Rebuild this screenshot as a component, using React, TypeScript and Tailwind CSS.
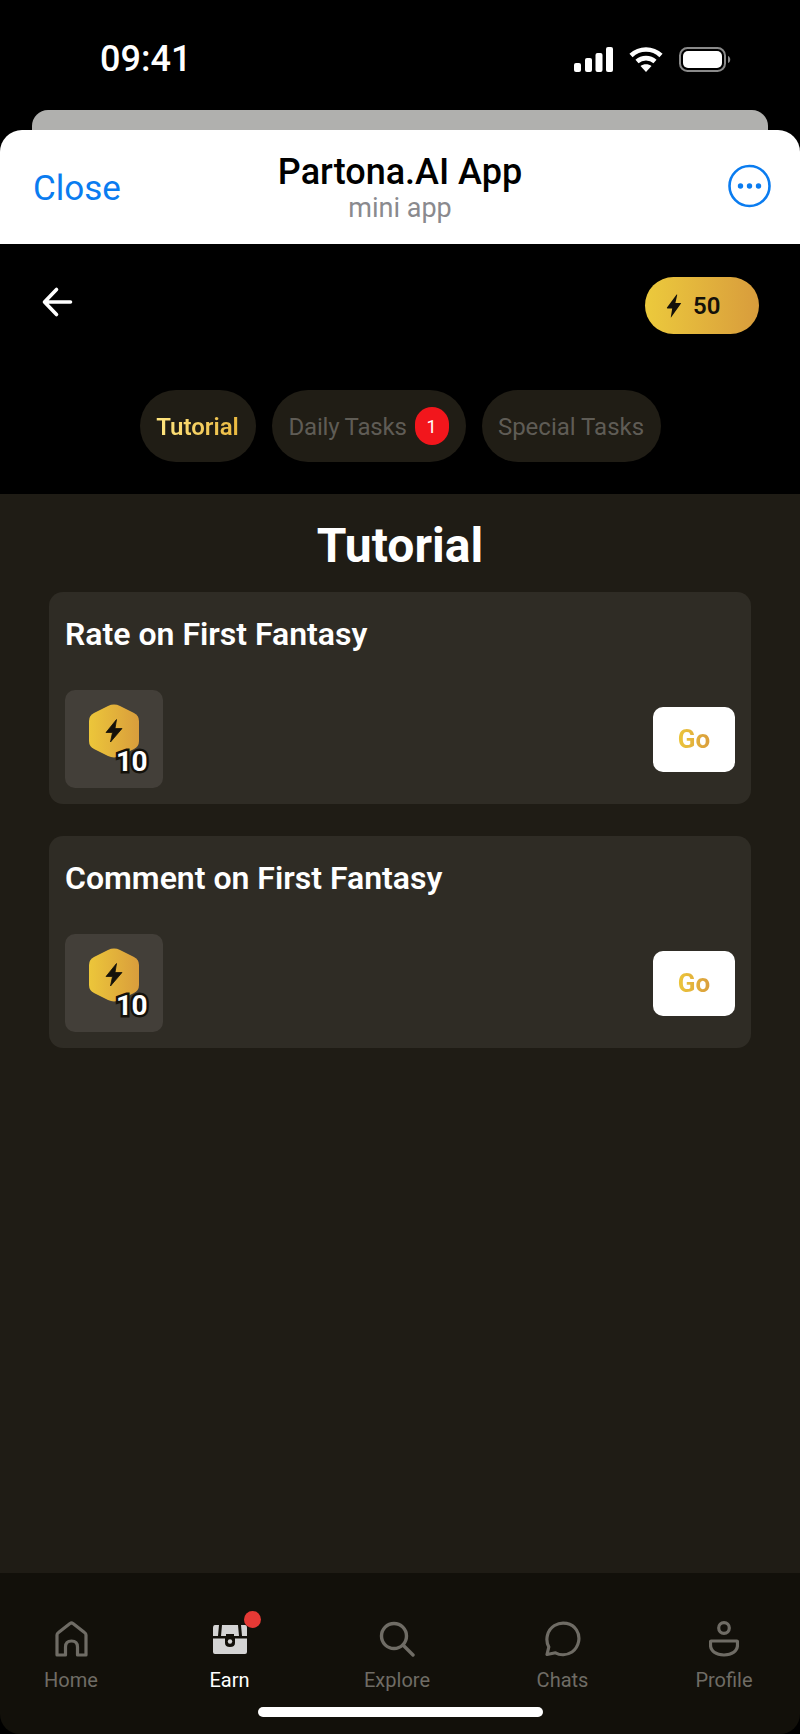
import React from "react";

const UI = "font-['Roboto',sans-serif]";

function Bolt({ className }: { className?: string }) {
  return (
    <svg className={className} viewBox="0 0 16 24" fill="#14110a">
      <path d="M10.6 0.6 L1 13.6 Q0.5 14.4 1.4 14.4 L6.2 14.4 L4.8 23.2 Q4.7 23.9 5.2 23.3 L15 9.6 Q15.5 8.9 14.6 8.9 L9.4 8.9 L11.2 1 Q11.3 0 10.6 0.6 Z" />
    </svg>
  );
}

function StatusBar() {
  return (
    <div className={`h-[110px] flex items-start justify-between pt-[42px] pl-[100px] pr-[67px] ${UI}`}>
      <span className="text-[36px] leading-[34px] font-medium text-white">09:41</span>
      <div className="flex items-start gap-[16px] pt-[5px]">
        <svg width="39" height="25" viewBox="0 0 39 25" fill="#fff">
          <rect x="0" y="16" width="7" height="9" rx="2" />
          <rect x="11" y="11" width="7" height="14" rx="2" />
          <rect x="21.5" y="6" width="7" height="19" rx="2" />
          <rect x="32" y="0" width="7" height="25" rx="2" />
        </svg>
        <svg width="34" height="25" viewBox="0 0 34 25" fill="none" stroke="#fff" strokeWidth="4.6">
          <path d="M2 8.5 C10.5 0.5 23.5 0.5 32 8.5" />
          <path d="M8 14.5 C13 10 21 10 26 14.5" />
          <path d="M17 25 L11.5 19 C14.5 16.5 19.5 16.5 22.5 19 Z" fill="#fff" stroke="none" />
        </svg>
        <svg width="54" height="25" viewBox="0 0 54 25" fill="none">
          <rect x="1" y="1" width="45" height="23" rx="7.5" stroke="#8a8a8a" strokeWidth="2" />
          <rect x="4" y="4" width="39" height="17" rx="5" fill="#fff" />
          <path d="M49 9 C52 10 52 15 49 16 Z" fill="#8a8a8a" />
        </svg>
      </div>
    </div>
  );
}

function SheetBar() {
  return (
    <div className={`h-[114px] bg-white rounded-t-[22px] grid grid-cols-[1fr_auto_1fr] items-center px-[33px] ${UI}`}>
      <span className="text-[#0a7cf0] text-[35px] leading-none pt-[2px]">Close</span>
      <div className="flex flex-col items-center">
        <span className="text-black text-[36px] leading-[41px] font-medium">Partona.AI App</span>
        <span className="text-[#8a8a8e] text-[27px] leading-[30px]">mini app</span>
      </div>
      <svg width="43" height="44" viewBox="0 0 43 44" fill="none" className="justify-self-end -mr-[4px] mt-[-2px]">
        <circle cx="21.5" cy="22" r="20" stroke="#0a7cf0" strokeWidth="2.6" />
        <circle cx="12.5" cy="22" r="2.7" fill="#0a7cf0" />
        <circle cx="21.5" cy="22" r="2.7" fill="#0a7cf0" />
        <circle cx="30.5" cy="22" r="2.7" fill="#0a7cf0" />
      </svg>
    </div>
  );
}

function TopRow() {
  return (
    <div className="flex items-start justify-between pl-[41px] pr-[41px] pt-[33px]">
      <svg width="32" height="32" viewBox="0 0 32 32" fill="none" stroke="#fff" strokeWidth="3.6" className="mt-[9px]" strokeLinecap="round" strokeLinejoin="round">
        <path d="M29.5 16 L4 16 M15.5 3.500 L3.500 16 L15.5 28.500" />
      </svg>
      <div className={`w-[114px] h-[57px] rounded-full bg-gradient-to-r from-[#ecca3c] to-[#d89c3c] flex items-center pl-[21px] gap-[11px] ${UI}`}>
        <Bolt className="w-[16px] h-[24px]" />
        <span className="text-[#14110a] text-[24px] font-semibold leading-none">50</span>
      </div>
    </div>
  );
}

function Tabs() {
  return (
    <div className={`flex justify-center gap-[16px] mt-[56px] ${UI}`}>
      <div className="h-[72px] w-[116px] rounded-[36px] bg-[#201d15] flex items-center justify-center pt-[2px]">
        <span className="bg-gradient-to-r from-[#ffe680] to-[#eab93f] bg-clip-text text-transparent text-[24px] font-semibold">Tutorial</span>
      </div>
      <div className="h-[72px] w-[194px] rounded-[36px] bg-[#201d15] flex items-center justify-between pl-[17px] pr-[17px]">
        <span className="text-[#5f5c55] text-[24px] tracking-[-0.2px] pt-[2px]">Daily Tasks</span>
        <span className="w-[34px] h-[38px] rounded-full bg-[#f2161c] text-white text-[18px] flex items-center justify-center">1</span>
      </div>
      <div className="h-[72px] w-[179px] rounded-[36px] bg-[#201d15] flex items-center justify-center pt-[2px]">
        <span className="text-[#5f5c55] text-[24px]">Special Tasks</span>
      </div>
    </div>
  );
}

function TaskCard({ title }: { title: string }) {
  return (
    <div className="h-[212px] rounded-[14px] bg-[#2f2c25] pt-[23px] px-[16px] flex flex-col justify-between pb-[16px]">
      <h3 className="text-white text-[32px] leading-[38px] font-semibold">{title}</h3>
      <div className="flex items-center justify-between">
        <div className="relative w-[98px] h-[98px] rounded-[10px] bg-[#433f39]">
          <svg className="absolute left-[24px] top-[14px]" width="50" height="54" viewBox="0 0 50 54">
            <defs>
              <linearGradient id="hexGold" x1="0" x2="1" y1="0" y2="0">
                <stop offset="0" stopColor="#ecc63a" />
                <stop offset="1" stopColor="#d99d3c" />
              </linearGradient>
            </defs>
            <path d="M19 2 Q25 -0.800 31 2 L45 9 Q50 11.500 50 17 L50 37 Q50 42.500 45 45 L31 52 Q25 54.800 19 52 L5 45 Q0 42.500 0 37 L0 17 Q0 11.500 5 9 Z" fill="url(#hexGold)" />
            <path d="M27.500 15.500 L17 28.500 L23.500 28.500 L21.500 38 L33 24.500 L26 24.500 Z" fill="#14110a" stroke="#14110a" strokeWidth="0.8" strokeLinejoin="round" />
          </svg>
          <span className="absolute left-[51px] top-[56px] text-white text-[28px] leading-[32px] font-bold tracking-[-0.5px] [-webkit-text-stroke:5px_#14110a] [paint-order:stroke_fill]">10</span>
        </div>
        <button className="w-[82px] h-[65px] rounded-[10px] bg-white">
          <span className="bg-gradient-to-r from-[#ecc63a] to-[#d99d3c] bg-clip-text text-transparent text-[26px] font-bold">Go</span>
        </button>
      </div>
    </div>
  );
}

function Content() {
  return (
    <div className={`flex-1 mt-[32px] bg-[#1f1c15] px-[49px] ${UI}`}>
      <h1 className="text-white text-center text-[48px] leading-[54px] font-bold pt-[25px] mb-[19px]">Tutorial</h1>
      <div className="flex flex-col gap-[32px]">
        <TaskCard title="Rate on First Fantasy" />
        <TaskCard title="Comment on First Fantasy" />
      </div>
    </div>
  );
}

function NavItem({ label, active, children }: { label: string; active?: boolean; children: React.ReactNode }) {
  return (
    <div className="flex flex-col items-center">
      <div className="relative h-[36px] flex items-center justify-center">{children}</div>
      <span className={`mt-[9px] text-[20px] leading-[28px] ${active ? "text-white" : "text-[#6f6c65]"}`}>{label}</span>
    </div>
  );
}

function BottomNav() {
  return (
    <div className={`relative h-[161px] bg-[#12100a] rounded-b-[20px] grid grid-cols-[142px_175px_160px_171px_152px] items-start pt-[48px] ${UI}`}>
      <NavItem label="Home">
        <svg width="33" height="36" viewBox="0 0 33 36" fill="none" stroke="#6f6c65" strokeWidth="3.2" strokeLinejoin="round">
          <path d="M2 14 Q2 12.5 3.5 11.5 L15 2.5 Q16.5 1.5 18 2.5 L29.5 11.5 Q31 12.5 31 14 L31 34 L22.5 34 L22.5 26 Q22.5 20 16.5 20 Q10.5 20 10.5 26 L10.5 34 L2 34 Z" />
        </svg>
      </NavItem>
      <NavItem label="Earn" active>
        <svg width="36" height="30" viewBox="0 0 36 30" className="mt-[1px]">
          <path d="M7 0 L3 0 Q1 0 1 3 L1 11 L6 11 Z" fill="#d4d4d4" />
          <path d="M29 0 L33 0 Q35 0 35 3 L35 11 L30 11 Z" fill="#d4d4d4" />
          <path d="M10 0 L26 0 L27 11 L22 11 L22 9 L14 9 L14 11 L9 11 Z" fill="#d4d4d4" />
          <path d="M1 13.5 L13 13.5 L13 18 Q13 22 18 22 Q23 22 23 18 L23 13.5 L35 13.5 L35 27 Q35 29 33 29 L3 29 Q1 29 1 27 Z" fill="#d4d4d4" />
          <circle cx="18" cy="16.5" r="2.2" fill="#d4d4d4" />
        </svg>
        <span className="absolute left-[32px] top-[-10px] w-[17px] h-[17px] rounded-full bg-[#e53935]" />
      </NavItem>
      <NavItem label="Explore">
        <svg width="36" height="36" viewBox="0 0 36 36" fill="none" stroke="#6f6c65" strokeWidth="3.4" strokeLinecap="round">
          <circle cx="15" cy="15" r="12.5" />
          <path d="M24 24 L34 34" />
        </svg>
      </NavItem>
      <NavItem label="Chats">
        <svg width="36" height="36" viewBox="0 0 36 36" fill="none" stroke="#6f6c65" strokeWidth="3.2" strokeLinejoin="round">
          <path d="M2 33.5 L3.8 26 C0 19 2 9 9.5 4.5 C17 0 27 2 31.500 9 C36 16 34 26 27 31 C21.500 34.500 15 34.500 10.500 31.800 Z" />
        </svg>
      </NavItem>
      <NavItem label="Profile">
        <svg width="30" height="36" viewBox="0 0 30 36" fill="none" stroke="#6f6c65" strokeWidth="3.2">
          <circle cx="15" cy="7" r="5.300" />
          <path d="M2 20 L28 20 Q28.500 20 28.500 21 L28.500 24 C28.500 30 23 34 15 34 C7 34 1.500 30 1.500 24 L1.500 21 Q1.500 20 2 20 Z" />
        </svg>
      </NavItem>
      {/* iOS home indicator */}
      <div className="absolute left-[258px] top-[134px] w-[285px] h-[10px] rounded-full bg-white" />
    </div>
  );
}

export default function App() {
  return (
    <div className="w-[800px] h-[1734px] bg-black flex flex-col overflow-hidden">
      <StatusBar />
      <div className="bg-[#b0b0ae] mx-[32px] h-[20px] rounded-t-[16px]" />
      <SheetBar />
      <TopRow />
      <Tabs />
      <Content />
      <BottomNav />
    </div>
  );
}
